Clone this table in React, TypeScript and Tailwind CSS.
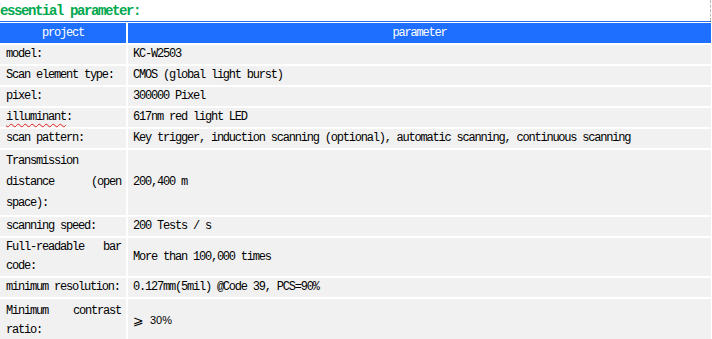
import React from "react";

const mono = { fontFamily: '"Liberation Mono", "DejaVu Sans Mono", monospace' };

type Row = { label: React.ReactNode; value: React.ReactNode; kind?: "trans" | "two" | "contrast" };

const rows: Row[] = [
  { label: "model:", value: "KC-W2503" },
  { label: "Scan element type:", value: "CMOS (global light burst)" },
  { label: "pixel:", value: "300000 Pixel" },
  {
    label: (
      <>
        <span className="underline decoration-wavy decoration-[#e02020] decoration-1 underline-offset-[3px]">illuminant</span>:
      </>
    ),
    value: "617nm red light LED",
  },
  {
    label: "scan pattern:",
    value: "Key trigger, induction scanning (optional), automatic scanning, continuous scanning",
  },
  { label: "Transmission distance (open space):", value: "200,400 m", kind: "trans" },
  { label: "scanning speed:", value: "200 Tests / s" },
  { label: "Full-readable bar code:", value: "More than 100,000 times", kind: "two" },
  { label: "minimum resolution:", value: "0.127mm(5mil) @Code 39, PCS=90%" },
  {
    label: "Minimum contrast ratio:",
    value: (
      <span className="flex items-center gap-[6px]">
        <span style={{ fontFamily: '"DejaVu Sans", sans-serif' }} className="text-[13px] tracking-normal">⩾</span>
        <span style={{ fontFamily: '"Liberation Sans", Arial, sans-serif' }} className="text-[11px] tracking-normal">30%</span>
      </span>
    ),
    kind: "contrast",
  },
];

export default function App() {
  return (
    <div className="w-[712px] h-[339px] overflow-hidden bg-white text-black" style={mono}>
      <div className="w-[711px]">
        <div className="h-[21px] border-r border-dashed border-[#b8b8b8] flex items-center">
          <span className="text-[14px] font-bold tracking-[-1.4px] text-[#00a84f] leading-none pt-px">
            essential parameter:
          </span>
        </div>
        <div className="h-px bg-[#2a6ae6]" />
        <div className="h-px bg-white" />
        <div className="grid grid-cols-[126px_1fr] gap-x-[2px] gap-y-[2px] bg-white text-[12px] tracking-[-1.21px]">
          <div className="h-[20px] bg-[#1e6fff] text-white flex items-center justify-center">project</div>
          <div className="h-[20px] bg-[#1e6fff] text-white flex items-center justify-center">parameter</div>
          {rows.map((r, i) => {
            const lead =
              r.kind === "trans" ? "leading-[21px] py-px" : "leading-[19px]";
            const minH = r.kind === "contrast" ? "min-h-[43px]" : "";
            return (
              <React.Fragment key={i}>
                <div className={`bg-[#f1f1f1] flex items-center pl-[6px] pr-[5px] ${minH}`}>
                  <div className={`w-full text-justify ${lead}`}>{r.label}</div>
                </div>
                <div className={`bg-[#f1f1f1] flex items-center pl-[5px] pr-2 leading-[19px] ${minH}`}>
                  {r.value}
                </div>
              </React.Fragment>
            );
          })}
        </div>
      </div>
    </div>
  );
}
